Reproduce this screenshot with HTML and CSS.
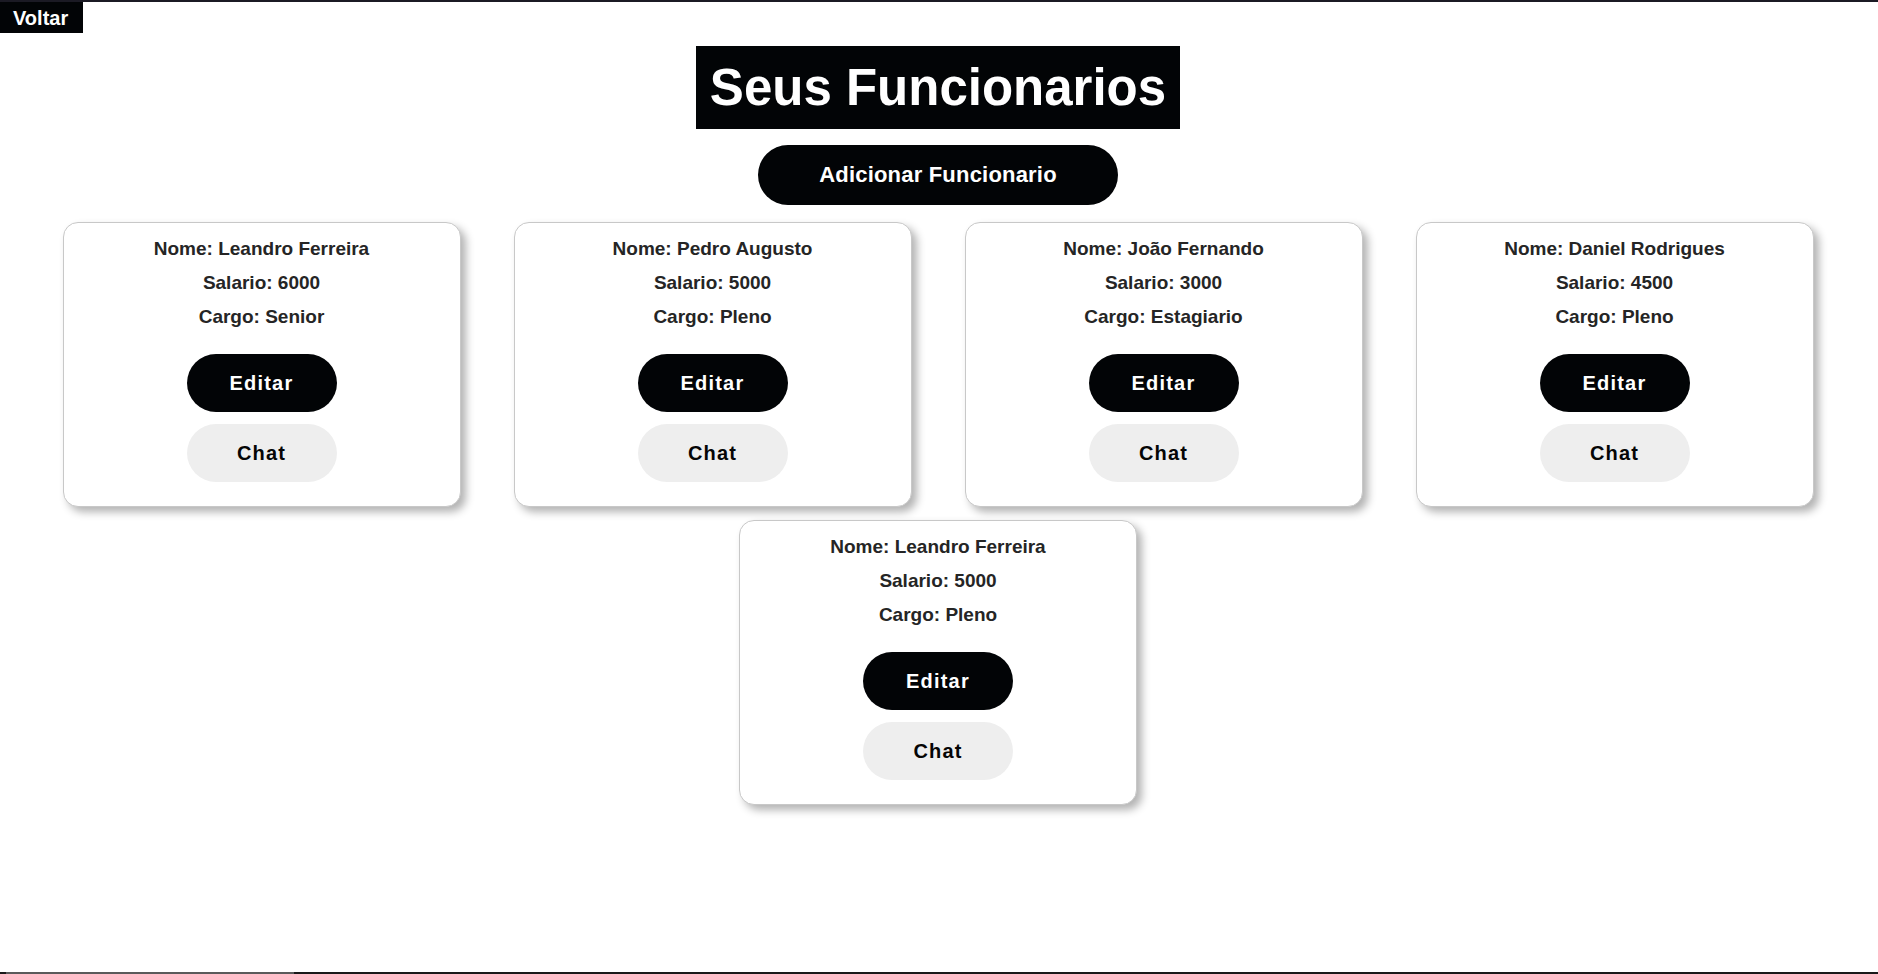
FILE: index.html
```html
<!DOCTYPE html>
<html lang="pt">
<head>
<meta charset="utf-8">
<title>Seus Funcionarios</title>
<link rel="stylesheet" href="styles.css">
</head>
<body>
<div class="topline"></div>
<a class="back" href="#">Voltar</a>
<main class="page">
  <h1 class="title">Seus Funcionarios</h1>
  <button class="add">Adicionar Funcionario</button>
  <section class="grid">
    <div class="card">
      <p>Nome: Leandro Ferreira</p>
      <p>Salario: 6000</p>
      <p>Cargo: Senior</p>
      <button class="btn edit">Editar</button>
      <button class="btn chat">Chat</button>
    </div>
    <div class="card">
      <p>Nome: Pedro Augusto</p>
      <p>Salario: 5000</p>
      <p>Cargo: Pleno</p>
      <button class="btn edit">Editar</button>
      <button class="btn chat">Chat</button>
    </div>
    <div class="card">
      <p>Nome: João Fernando</p>
      <p>Salario: 3000</p>
      <p>Cargo: Estagiario</p>
      <button class="btn edit">Editar</button>
      <button class="btn chat">Chat</button>
    </div>
    <div class="card">
      <p>Nome: Daniel Rodrigues</p>
      <p>Salario: 4500</p>
      <p>Cargo: Pleno</p>
      <button class="btn edit">Editar</button>
      <button class="btn chat">Chat</button>
    </div>
    <div class="card">
      <p>Nome: Leandro Ferreira</p>
      <p>Salario: 5000</p>
      <p>Cargo: Pleno</p>
      <button class="btn edit">Editar</button>
      <button class="btn chat">Chat</button>
    </div>
  </section>
</main>
<div class="scrollbar"><div class="thumb"></div></div>
</body>
</html>
```
FILE: styles.css
```css
* { box-sizing: border-box; }
html, body {
  margin: 0;
  padding: 0;
  background: #ffffff;
  font-family: "Liberation Sans", Arial, sans-serif;
}
body {
  min-height: 974px;
}
.topline {
  height: 2px;
  background: #1b1a24;
}
.back {
  display: inline-block;
  vertical-align: top;
  height: 31px;
  width: 83px;
  padding: 5px 0 0 13px;
  background: #020406;
  color: #ffffff;
  font-weight: bold;
  font-size: 20px;
  line-height: 23px;
  text-decoration: none;
}
.page {
  display: flex;
  flex-direction: column;
  align-items: center;
  margin-top: 13px;
  padding-right: 2px;
}
.title {
  margin: 0;
  background: #020406;
  color: #ffffff;
  font-size: 51px;
  line-height: 59px;
  height: 83px;
  padding: 12px 14px;
  font-weight: bold;
}
.add {
  margin-top: 16px;
  width: 360px;
  height: 60px;
  border: none;
  border-radius: 30px;
  background: #020406;
  color: #ffffff;
  font-family: "Liberation Sans", Arial, sans-serif;
  font-weight: bold;
  font-size: 22px;
  letter-spacing: 0.2px;
  padding: 0;
}
.grid {
  margin-top: 17px;
  display: flex;
  flex-wrap: wrap;
  justify-content: center;
  gap: 13px 53px;
  width: 100%;
}
.card {
  width: 398px;
  height: 285px;
  border: 1px solid #c8c8c8;
  border-radius: 15px;
  background: #ffffff;
  box-shadow: 5px 5px 9px rgba(0, 0, 0, 0.3);
  display: flex;
  flex-direction: column;
  align-items: center;
  padding: 14px 0 23px;
}
.card p {
  margin: 0 0 11px;
  font-size: 19px;
  line-height: 23px;
  font-weight: bold;
  color: #252525;
}
.card p:nth-of-type(3) {
  margin-bottom: 26px;
}
.btn {
  width: 150px;
  height: 58px;
  border: none;
  border-radius: 29px;
  font-family: "Liberation Sans", Arial, sans-serif;
  font-weight: bold;
  font-size: 20px;
  letter-spacing: 1.2px;
  padding: 0;
}
.edit {
  background: #020406;
  color: #ffffff;
}
.chat {
  margin-top: 12px;
  background: #eeeeee;
  color: #050505;
}
.scrollbar {
  position: fixed;
  left: 0;
  right: 0;
  bottom: 0;
  height: 2px;
  background: #1a1a1a;
}
.thumb {
  margin-left: 6px;
  width: 288px;
  height: 2px;
  background: #5a5a5a;
}
```
